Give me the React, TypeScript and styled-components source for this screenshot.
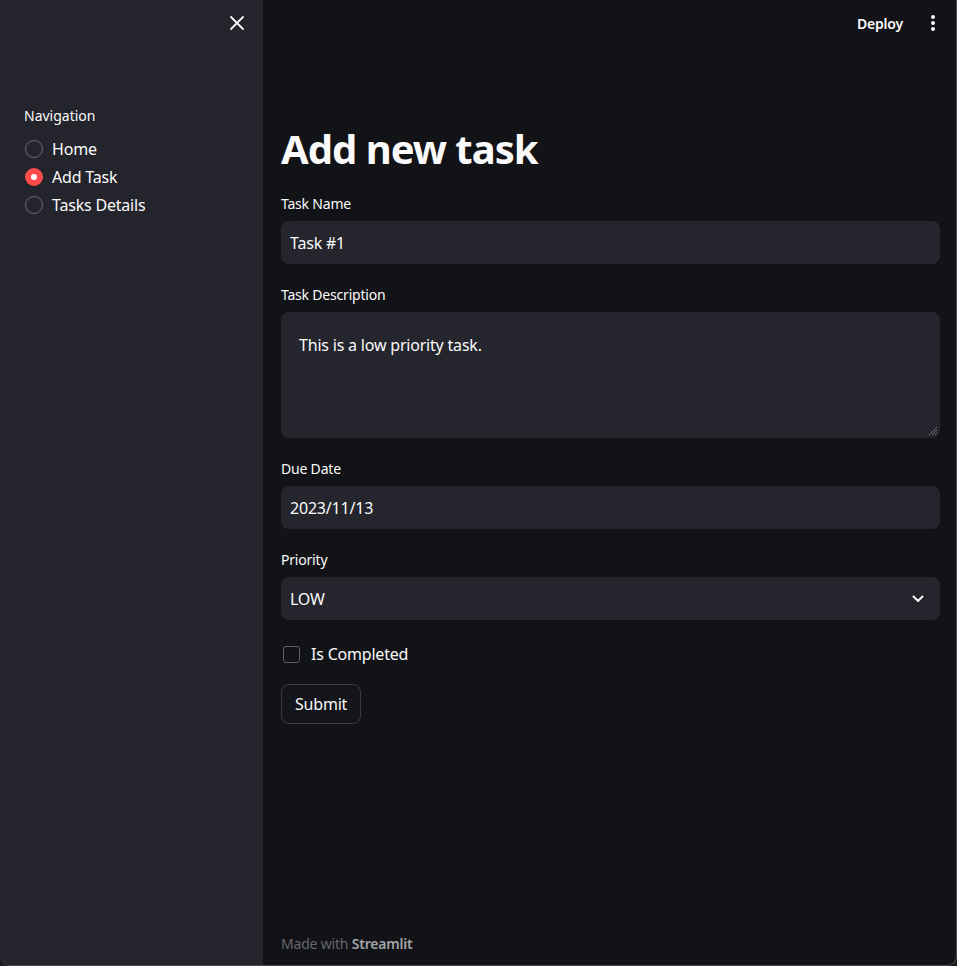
import React from "react";
import styled, { createGlobalStyle } from "styled-components";

const GlobalStyle = createGlobalStyle`
  html, body {
    margin: 0;
    padding: 0;
    background: #1a1a1e;
  }
  * { box-sizing: border-box; }
`;

const Frame = styled.div`
  width: 957px;
  height: 966px;
  display: flex;
  border-right: 1px solid #4b4c52;
  border-bottom: 1px solid #4b4c52;
  border-radius: 0 0 10px 10px;
  overflow: hidden;
  font-family: "Noto Sans", "Open Sans", sans-serif;
  color: #fafafa;
`;

const Sidebar = styled.aside`
  width: 263px;
  flex-shrink: 0;
  background: #23242c;
  display: flex;
  flex-direction: column;
`;

const SidebarTop = styled.div`
  height: 104px;
  display: flex;
  justify-content: flex-end;
  padding: 12px 15px 0 0;
`;

const IconButton = styled.button`
  width: 22px;
  height: 22px;
  padding: 0;
  border: none;
  background: transparent;
  color: #fafafa;
  display: flex;
  align-items: center;
  justify-content: center;
  cursor: pointer;
`;

const Nav = styled.div`
  padding: 0 24px;
`;

const SmallLabel = styled.div`
  font-size: 14px;
  line-height: 22px;
  color: #fafafa;
  margin: 1px 0 8px;
`;

const RadioRow = styled.label`
  display: flex;
  align-items: center;
  height: 28px;
  gap: 9px;
  font-size: 16px;
  letter-spacing: -0.2px;
  cursor: pointer;
`;

const RadioDot = styled.span<{ $on?: boolean }>`
  width: 18px;
  height: 18px;
  margin-left: 1px;
  border-radius: 50%;
  display: flex;
  align-items: center;
  justify-content: center;
  border: ${(p) => (p.$on ? "none" : "1px solid #6b6c73")};
  background: ${(p) => (p.$on ? "#ff4b4b" : "transparent")};
  &::after {
    content: "";
    display: ${(p) => (p.$on ? "block" : "none")};
    width: 6px;
    height: 6px;
    border-radius: 50%;
    background: #fff;
  }
`;

const Main = styled.main`
  flex: 1;
  background: #121317;
  display: flex;
  flex-direction: column;
`;

const Header = styled.header`
  height: 46px;
  display: flex;
  align-items: center;
  justify-content: flex-end;
  gap: 19px;
  padding-right: 12px;
`;

const DeployButton = styled.button`
  background: transparent;
  border: none;
  color: #fafafa;
  font-family: inherit;
  font-size: 14px;
  font-weight: 600;
  letter-spacing: -0.2px;
  padding: 0;
  cursor: pointer;
`;

const Content = styled.div`
  flex: 1;
  padding: 75px 16px 0 18px;
  display: flex;
  flex-direction: column;
`;

const Title = styled.h1`
  margin: 0 0 17px;
  font-size: 40px;
  font-weight: 700;
  line-height: 56px;
  letter-spacing: -1px;
`;

const Field = styled.div`
  display: flex;
  flex-direction: column;
  margin-bottom: 21px;
`;

const FieldLabel = styled.div`
  font-size: 14px;
  line-height: 20px;
  height: 22px;
  margin-bottom: 5px;
  letter-spacing: -0.2px;
`;

const Box = styled.div<{ $tall?: boolean }>`
  position: relative;
  height: ${(p) => (p.$tall ? "126px" : "43px")};
  background: #24252d;
  border-radius: 8px;
  display: flex;
  align-items: ${(p) => (p.$tall ? "flex-start" : "center")};
  justify-content: space-between;
  padding: ${(p) => (p.$tall ? "22px 18px" : "0 16px 0 9px")};
  font-size: 16px;
  letter-spacing: -0.2px;
`;

const Grip = styled.svg`
  position: absolute;
  right: 2px;
  bottom: 2px;
`;

const CheckRow = styled.label`
  display: flex;
  align-items: center;
  gap: 11px;
  font-size: 16px;
  letter-spacing: -0.2px;
  height: 28px;
  margin: -1px 0 16px 2px;
`;

const CheckBox = styled.span`
  width: 17px;
  height: 17px;
  border: 1px solid #5f6068;
  border-radius: 3px;
`;

const SubmitButton = styled.button`
  align-self: flex-start;
  height: 40px;
  padding: 0 13px;
  background: #13151b;
  color: #fafafa;
  border: 1px solid #3a3b42;
  border-radius: 8px;
  font-family: inherit;
  font-size: 16px;
  letter-spacing: -0.2px;
  cursor: pointer;
`;

const Footer = styled.footer`
  padding: 0 0 12px 18px;
  font-size: 14px;
  letter-spacing: -0.2px;
  color: #66676d;
  b {
    font-weight: 600;
    color: #a3a4a8;
  }
`;

export default function App() {
  return (
    <>
      <GlobalStyle />
      <Frame>
        <Sidebar>
          <SidebarTop>
            <IconButton aria-label="close">
              <svg width="16" height="16" viewBox="0 0 16 16">
                <path d="M2 2L14 14M14 2L2 14" stroke="#fafafa" strokeWidth="1.8" strokeLinecap="round" />
              </svg>
            </IconButton>
          </SidebarTop>
          <Nav>
            <SmallLabel>Navigation</SmallLabel>
            <RadioRow>
              <RadioDot />
              Home
            </RadioRow>
            <RadioRow>
              <RadioDot $on />
              Add Task
            </RadioRow>
            <RadioRow>
              <RadioDot />
              Tasks Details
            </RadioRow>
          </Nav>
        </Sidebar>
        <Main>
          <Header>
            <DeployButton>Deploy</DeployButton>
            <IconButton aria-label="menu">
              <svg width="6" height="18" viewBox="0 0 6 18">
                <circle cx="3" cy="3" r="2" fill="#fafafa" />
                <circle cx="3" cy="9" r="2" fill="#fafafa" />
                <circle cx="3" cy="15" r="2" fill="#fafafa" />
              </svg>
            </IconButton>
          </Header>
          <Content>
            <Title>Add new task</Title>
            <Field>
              <FieldLabel>Task Name</FieldLabel>
              <Box>Task #1</Box>
            </Field>
            <Field>
              <FieldLabel>Task Description</FieldLabel>
              <Box $tall>
                This is a low priority task.
                <Grip width="12" height="12" viewBox="0 0 12 12">
                  <path d="M11 3L3 11M11 6L6 11M11 9L9 11" stroke="#6b6c73" strokeWidth="1" />
                </Grip>
              </Box>
            </Field>
            <Field>
              <FieldLabel>Due Date</FieldLabel>
              <Box>2023/11/13</Box>
            </Field>
            <Field>
              <FieldLabel>Priority</FieldLabel>
              <Box>
                LOW
                <svg width="12" height="8" viewBox="0 0 12 8">
                  <path d="M1.5 1.5L6 6L10.5 1.5" stroke="#fafafa" strokeWidth="2" fill="none" strokeLinecap="round" strokeLinejoin="round" />
                </svg>
              </Box>
            </Field>
            <CheckRow>
              <CheckBox />
              Is Completed
            </CheckRow>
            <SubmitButton>Submit</SubmitButton>
          </Content>
          <Footer>
            Made with <b>Streamlit</b>
          </Footer>
        </Main>
      </Frame>
    </>
  );
}
